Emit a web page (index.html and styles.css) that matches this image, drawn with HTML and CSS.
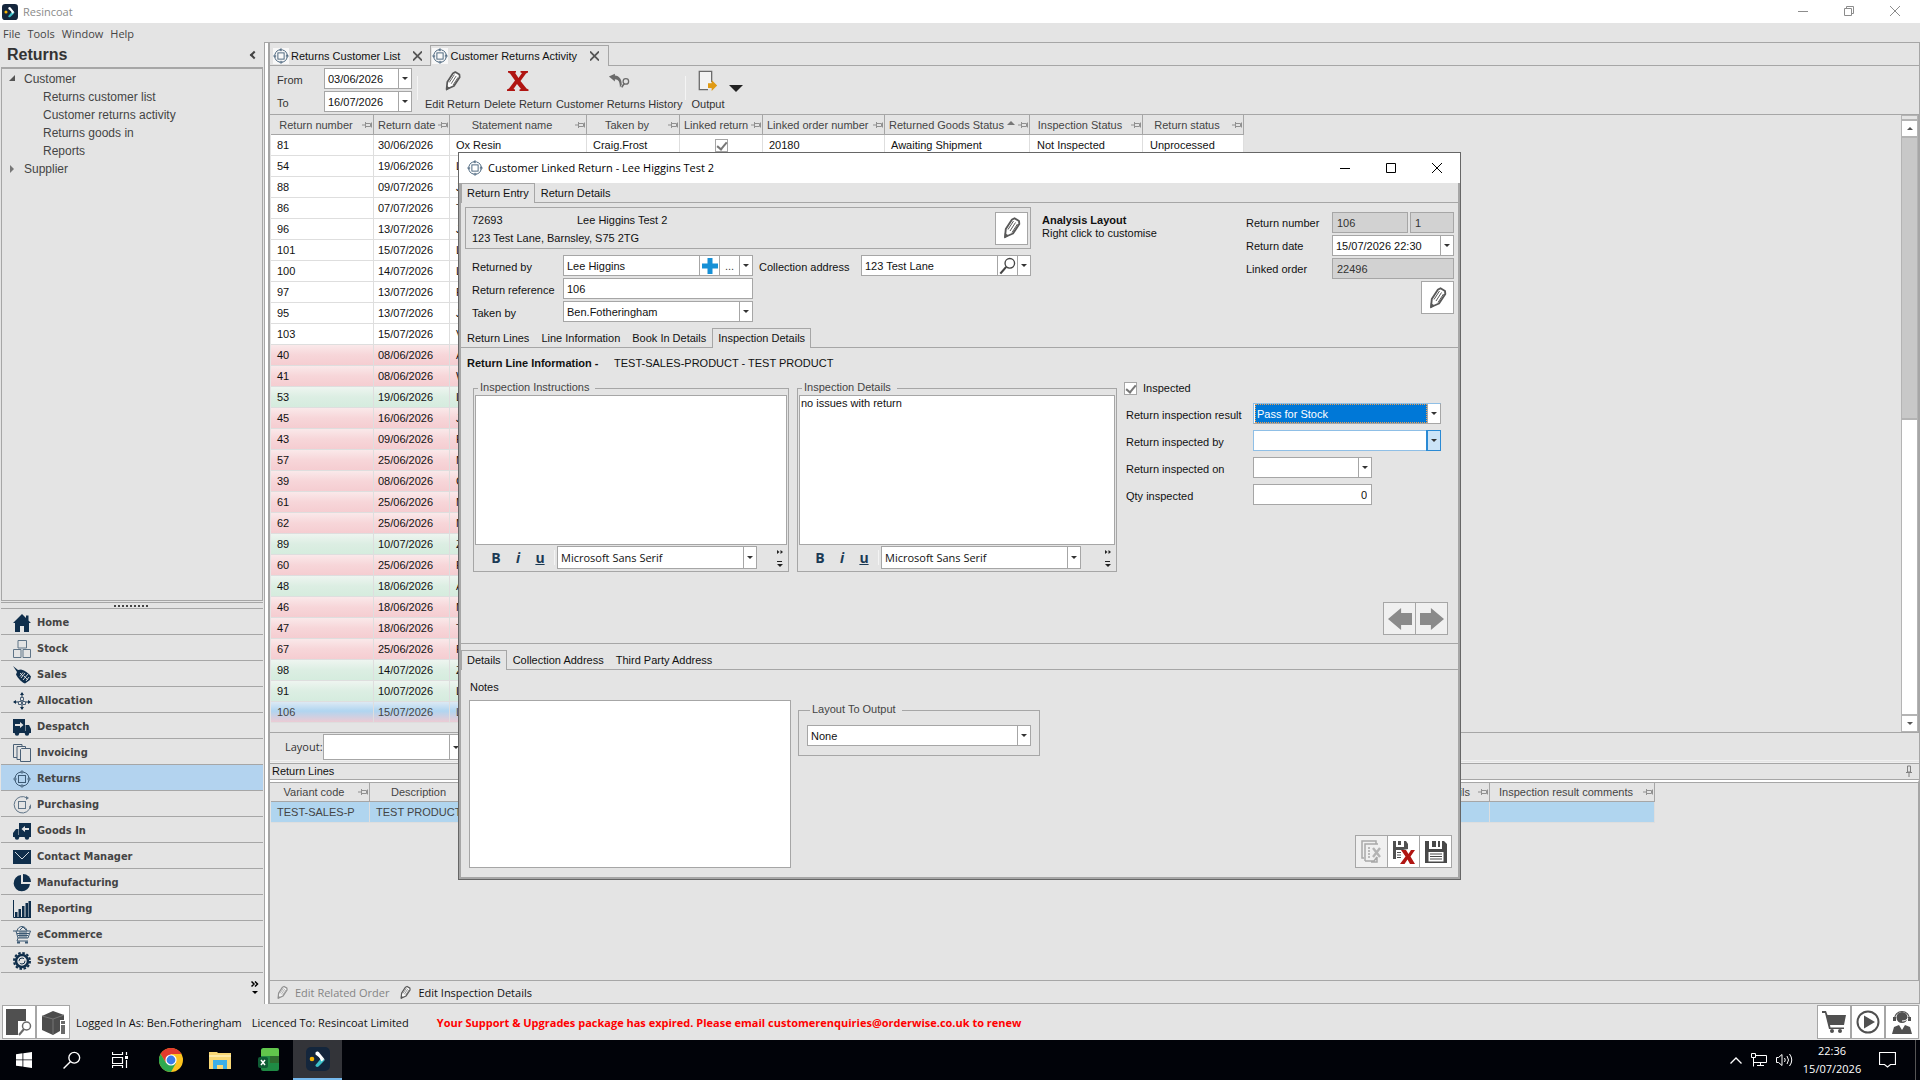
FILE: index.html
```html
<!DOCTYPE html>
<html lang="en">
<head>
<meta charset="utf-8">
<title>Resincoat</title>
<link rel="stylesheet" href="styles.css">
</head>
<body>
<svg class="sprite" aria-hidden="true">
  <symbol id="logo" viewBox="0 0 24 24"><rect width="24" height="24" rx="5" fill="#14263c"/><path d="M9.500 5.500C11 4 12.500 4.500 13.500 6l4.500 5.500c.5 1 .5 1.500 0 2.500L9.500 7.500z" fill="#fff"/><path d="M18 12c.5 1 .3 1.700-.5 2.500l-5 5c-1.500 1-3.500 0-3-1.500l5.500-6.500z" fill="#3cc0c8"/><path d="M12 8l6 4.500-2.500 2z" fill="#fff"/><circle cx="6" cy="12" r="2.300" fill="#f7b500"/></symbol>
  <symbol id="returns" viewBox="0 0 18 18"><circle cx="9" cy="9" r="7" fill="none" stroke="#3d5a74" stroke-width="1" stroke-dasharray="9 2" stroke-dashoffset="-1"/><rect x="5.500" y="5.500" width="7" height="7" fill="none" stroke="#3d5a74"/><path d="M9 0l2 2-2 2-2-2zM9 14l2 2-2 2-2-2zM0 9l2-2 2 2-2 2zM14 9l2-2 2 2-2 2z" fill="#3d5a74" opacity=".7"/></symbol>
  <symbol id="pencil" viewBox="0 0 24 24"><path d="M5 21l.8-8L12 3.500l2.500-1.200 4.500 2.700.3 3L13 17.500z" fill="#fff" stroke="#585858" stroke-width="1.900" stroke-linejoin="round"/><path d="M8 13.500l5.500-8.500M10 15l5.500-8.500M12 16.500l5.500-8.500" stroke="#585858" stroke-width="1" fill="none"/><path d="M4.500 22.500l.3-5.500 4 2.500z" fill="#585858"/></symbol>
  <symbol id="redx" viewBox="0 0 22 20"><path d="M1 0h8v1.500l-1 .3L11.500 7 15 2l-1.500-.5V0H21v1.500l-2 1L13.500 10l6 7.500 2 1V20h-9v-1.500l1.500-.5L10 13l-3.500 5 1.500.5V20H0v-1.500l2-1L8 9.500 3 2.500l-2-1z" fill="#b01512"/></symbol>
  <symbol id="history" viewBox="0 0 24 18"><path d="M1 4l6.500-3v2c5 .5 7.500 4 7.500 10l-2 3c0-6-1.500-9-5.500-9v2.500z" fill="#6a6a6a"/><circle cx="19.500" cy="9.500" r="3" fill="none" stroke="#6a6a6a" stroke-width="1.400"/><path d="M17.500 12l-2.500 4" stroke="#6a6a6a" stroke-width="1.800"/></symbol>
  <symbol id="output" viewBox="0 0 24 24"><path d="M16 13V1.500H2.500v20H12" fill="#f2f2f2" stroke="#6a6a6a" stroke-width="1.400"/><path d="M12 14.500h4V11l6 6-6 6v-3.500h-4z" fill="#e09a12"/></symbol>
  <symbol id="pin" viewBox="0 0 10 8"><path d="M0 4h3M3.500 1v6M3.500 2.500h5v3h-5M9.500 1.500v5" fill="none" stroke="#909090"/></symbol>
  <symbol id="pinv" viewBox="0 0 8 12"><path d="M2.500 1h3v6h-3zM1 7.500h6M4 8v4" fill="none" stroke="#808080"/></symbol>
  <symbol id="lens" viewBox="0 0 20 20"><circle cx="12" cy="7" r="5.300" fill="none" stroke="currentColor" stroke-width="1.500"/><path d="M8 11l-6.500 7.500" stroke="currentColor" stroke-width="2.400"/></symbol>
  <symbol id="plus" viewBox="0 0 18 18"><path d="M6.500 1h5v5.500H17v5h-5.500V17h-5v-5.500H1v-5h5.500z" fill="#1690d6"/></symbol>
  <symbol id="home" viewBox="0 0 18 18"><path d="M9 0l4 4V1.500h2.500V6.500L18 9h-2v9h-5v-6H7v6H2V9H0z" fill="#0f2e4b"/></symbol>
  <symbol id="stock" viewBox="0 0 18 18"><path d="M5 .5h8.500v7.500H5zM.5 9.500H8v8H.5zM10 9.500h7.500v8H10z" fill="none" stroke="#5f7487"/></symbol>
  <symbol id="sales" viewBox="0 0 18 18"><path d="M0 0l5 4 3-.5c4 1 8 4 10 7L17 14l-5 3.500c-3-1-7-5-9-9L4 6z" fill="#0f2e4b"/><path d="M7 7l3 3M10 6.500l-3 4M8 12l4-5M10 14l5-6M13 15l3-4M11 10l4 4" stroke="#e4e4e4" stroke-width=".9"/></symbol>
  <symbol id="alloc" viewBox="0 0 18 18"><path d="M9 1v5M9 13v4M1 10h4M13 10h4" stroke="#0f2e4b"/><path d="M9 0l2 3H7zM9 18l2-3H7zM0 10l3-2v4zM18 10l-3-2v4z" fill="#0f2e4b"/><path d="M7.500 5.500h3v3h-3zM5.500 9.500h3v3h-3zM9.500 9.500h3v3h-3z" fill="none" stroke="#4a6076"/></symbol>
  <symbol id="truck" viewBox="0 0 18 18"><path d="M0 1h12v12H0zM12.500 7H16l2 4v3h-5.500z" fill="#0f2e4b"/><path d="M2 6h5V4l3.500 3L7 10V8H2z" fill="#e4e4e4"/><path d="M0 13h18v2H0z" fill="#0f2e4b"/><circle cx="4" cy="15.500" r="2.200" fill="#0f2e4b"/><circle cx="14" cy="15.500" r="2.200" fill="#0f2e4b"/></symbol>
  <symbol id="truckin" viewBox="0 0 18 18"><path d="M6 1h12v12H6zM5.500 7H3l-3 4v3h5.500z" fill="#0f2e4b"/><path d="M16 6h-4V4L8.500 7l3.500 3V8h4z" fill="#e4e4e4"/><path d="M0 13h18v2H0z" fill="#0f2e4b"/><circle cx="4" cy="15.500" r="2.200" fill="#0f2e4b"/><circle cx="14" cy="15.500" r="2.200" fill="#0f2e4b"/></symbol>
  <symbol id="invoice" viewBox="0 0 18 18"><path d="M4 13.500H.5V.5H9V2M7 15.500H4v-13h8.500V4.500M8.500 4.500h9v13h-10v-12z" fill="none" stroke="#4a6076"/></symbol>
  <symbol id="purchase" viewBox="0 0 18 18"><path d="M14 2A8.200 8.200 0 1 0 17.500 10" fill="none" stroke="#5f7487"/><rect x="5.500" y="5.500" width="7" height="7" fill="none" stroke="#5f7487"/><path d="M13 0l3 2-3 2zM18 8v5l-2-2z" fill="#5f7487"/></symbol>
  <symbol id="mail" viewBox="0 0 18 14"><rect width="18" height="14" fill="#0f2e4b"/><path d="M2 2l7 7 7-7" fill="none" stroke="#cfd6dc"/></symbol>
  <symbol id="pie" viewBox="0 0 18 18"><path d="M8 1a8.200 8.200 0 1 0 9 9H8z" fill="#0f2e4b"/><path d="M10 0a8 8 0 0 1 8 8h-8z" fill="#0f2e4b"/></symbol>
  <symbol id="bars" viewBox="0 0 18 18"><path d="M.5 0v17.500H18" fill="none" stroke="#0f2e4b"/><path d="M2 12h2.500v5H2zM5.500 9H8v8H5.500zM9 6h2.500v11H9zM12.500 3H15v14h-2.500zM15.500 1H18v16h-2.500z" fill="#0f2e4b"/></symbol>
  <symbol id="basket" viewBox="0 0 18 18"><path d="M0 5h3l2 7h10l2.500-7H3M5 12l-1 3h11" fill="none" stroke="#3d5a74"/><path d="M4 7.500h12M5 9.500h10M7 5v7M9 5v7M11 5v7M13 5v7M4 5c1-6 9-6 10 0M7 4l3-3 3 3" fill="none" stroke="#3d5a74"/><path d="M4 15.500h3v2H4zM12 15.500h3v2h-3z" fill="#3d5a74"/></symbol>
  <symbol id="gear" viewBox="0 0 18 18"><circle cx="9" cy="9" r="8" fill="none" stroke="#0f2e4b" stroke-width="2" stroke-dasharray="2.500 1.700"/><circle cx="9" cy="9" r="6" fill="none" stroke="#0f2e4b" stroke-width="2.500"/><circle cx="9" cy="9" r="3" fill="none" stroke="#0f2e4b" stroke-dasharray="7 2"/></symbol>
  <symbol id="docfind" viewBox="0 0 28 28"><path d="M1 1h20v12h-8v14H1z" fill="#505050"/><path d="M14 14h13v13H14z" fill="#fff"/><circle cx="21.500" cy="18" r="4" fill="none" stroke="#6a6a6a" stroke-width="1.500"/><path d="M19 21l-5 6" stroke="#6a6a6a" stroke-width="2"/></symbol>
  <symbol id="cube" viewBox="0 0 28 28"><path d="M3 8l11-5 11 4v5h-4v11l-7 4L3 22z" fill="#4c4c4c"/><path d="M3 8l11 3 11-4M14 11v15" stroke="#757575" fill="none"/><path d="M22 13h4v3h-4zM22 17h4v9h-4z" fill="#6a6a6a"/></symbol>
  <symbol id="cart" viewBox="0 0 24 24"><path d="M0 1h4l1.500 4H24l-2 10H8l.5 2.500H22V19H7L3 3H0z" fill="#505050"/><circle cx="10" cy="21" r="2" fill="#505050"/><circle cx="18" cy="21" r="2" fill="#505050"/></symbol>
  <symbol id="play" viewBox="0 0 24 24"><circle cx="12" cy="12" r="10.500" fill="none" stroke="#505050" stroke-width="2"/><path d="M8 5.500l11 6.500-11 6.500z" fill="#505050"/></symbol>
  <symbol id="agent" viewBox="0 0 24 24"><circle cx="12" cy="7.500" r="5.500" fill="#505050"/><path d="M4.500 9a7.500 7.500 0 0 1 15 0" fill="none" stroke="#505050" stroke-width="1.200"/><path d="M3 7h3v4H3zM18 7h3v4h-3z" fill="#505050"/><path d="M12 11c3 0 5-1 6-3" fill="none" stroke="#fff"/><path d="M2 24l2-7 5-2 3 5 3-5 5 2 2 7z" fill="#505050"/></symbol>
  <symbol id="floppy" viewBox="0 0 24 24"><path d="M1 1h4v8h13V1h2l3 3v19H1z" fill="#484848"/><path d="M8 1h4v6H8zM14 1h2v6h-2z" fill="#484848"/><path d="M4.500 12h15v9.500h-15z" fill="#fff"/><path d="M6 14h12M6 16.500h12M6 19h12" stroke="#484848" stroke-width="1.200"/></symbol>
  <symbol id="floppyx" viewBox="0 0 24 24"><path d="M1 1h3v6h8V1h2l2 3v5l-5 1H4v9H1z" fill="#505050"/><path d="M6 1h3v4H6zM5 12h4v1H5zM5 14.500h4v1H5zM5 17h4v1H5z" fill="#505050"/><path d="M9 10h5l2.500 4 2.500-4h4l-4.500 6.500L23 24h-5l-2.500-4.500L12.500 24H8l5.500-7.500z" fill="#b01512"/></symbol>
  <symbol id="pagex" viewBox="0 0 24 24"><path d="M4 18H2V1h14v3M5 21V4h8l5 0M5 21h9l3-4M17 17v5h-6M8 8h2M8 11h2M8 14h2M8 17h2" fill="none" stroke="#a8a8a8" stroke-width="1.500"/><path d="M13 8l7 9M20 8l-7 9" stroke="#b4b4b4" stroke-width="2.400"/></symbol>
  <symbol id="left" viewBox="0 0 22 22"><path d="M0 11L12 1v4.500h10v11H12V21z" fill="#8a8a8a"/></symbol>
  <symbol id="right" viewBox="0 0 22 22"><path d="M22 11L10 1v4.500H0v11h10V21z" fill="#8a8a8a"/></symbol>
  <symbol id="min" viewBox="0 0 10 10"><path d="M0 5.500h10" stroke="currentColor"/></symbol>
  <symbol id="max" viewBox="0 0 10 10"><path d="M.5.5h9v9h-9z" fill="none" stroke="currentColor"/></symbol>
  <symbol id="restore" viewBox="0 0 10 10"><path d="M.5 2.500h7v7h-7zM2.500 2V.5h7v7H8" fill="none" stroke="currentColor"/></symbol>
  <symbol id="close" viewBox="0 0 10 10"><path d="M0 0l10 10M10 0L0 10" stroke="currentColor"/></symbol>
  <symbol id="more" viewBox="0 0 6 18"><path d="M0 1l2.500 2L0 5zM3.500 1L6 3 3.500 5z" fill="#222"/><path d="M0 12.500h5" stroke="#222"/><path d="M0 15h6l-3 3z" fill="#222"/></symbol>
</svg>

<header class="titlebar">
  <svg class="i16"><use href="#logo"/></svg><span class="apptitle">Resincoat</span>
  <div class="winctl dim"><button aria-label="Minimise"><svg><use href="#min"/></svg></button><button aria-label="Restore"><svg><use href="#restore"/></svg></button><button aria-label="Close"><svg><use href="#close"/></svg></button></div>
</header>
<nav class="menubar"><a href="#">File</a><a href="#">Tools</a><a href="#">Window</a><a href="#">Help</a></nav>

<div class="work">
  <aside class="side">
    <h1>Returns<span class="collapse"></span></h1>
    <ul class="tree">
      <li class="open">Customer</li>
      <li class="leaf"><a href="#">Returns customer list</a></li>
      <li class="leaf"><a href="#">Customer returns activity</a></li>
      <li class="leaf"><a href="#">Returns goods in</a></li>
      <li class="leaf"><a href="#">Reports</a></li>
      <li class="shut">Supplier</li>
    </ul>
    <div class="grip"></div>
    <nav class="modules">
      <a href="#"><svg><use href="#home"/></svg>Home</a>
      <a href="#"><svg><use href="#stock"/></svg>Stock</a>
      <a href="#"><svg><use href="#sales"/></svg>Sales</a>
      <a href="#"><svg><use href="#alloc"/></svg>Allocation</a>
      <a href="#"><svg><use href="#truck"/></svg>Despatch</a>
      <a href="#"><svg><use href="#invoice"/></svg>Invoicing</a>
      <a href="#" class="on"><svg><use href="#returns"/></svg>Returns</a>
      <a href="#"><svg><use href="#purchase"/></svg>Purchasing</a>
      <a href="#"><svg><use href="#truckin"/></svg>Goods In</a>
      <a href="#"><svg><use href="#mail"/></svg>Contact Manager</a>
      <a href="#"><svg><use href="#pie"/></svg>Manufacturing</a>
      <a href="#"><svg><use href="#bars"/></svg>Reporting</a>
      <a href="#"><svg><use href="#basket"/></svg>eCommerce</a>
      <a href="#"><svg><use href="#gear"/></svg>System</a>
    </nav>
    <div class="overflow"><svg width="8" height="14" viewBox="0 0 8 14"><path d="M.5.5l2.500 2.500L.5 5.500M4 .5L6.500 3 4 5.500" fill="none" stroke="#000" stroke-width="1.500"/><path d="M1 10h6l-3 3z"/></svg></div>
  </aside>

  <main class="main">
    <div class="doctabs">
      <div class="doctab"><svg class="i16 tile"><use href="#returns"/></svg>Returns Customer List<button class="x" aria-label="Close tab"><svg><use href="#close"/></svg></button></div>
      <div class="doctab on"><svg class="i16 tile"><use href="#returns"/></svg>Customer Returns Activity<button class="x" aria-label="Close tab"><svg><use href="#close"/></svg></button></div>
    </div>
    <div class="toolbar">
      <div class="dates">
        <label for="from">From</label><div class="combo"><input id="from" value="03/06/2026"><i class="arr"></i></div>
        <label for="to">To</label><div class="combo"><input id="to" value="16/07/2026"><i class="arr"></i></div>
      </div>
      <i class="sep"></i>
      <button class="tool"><svg><use href="#pencil"/></svg>Edit Return</button>
      <button class="tool"><svg><use href="#redx"/></svg>Delete Return</button>
      <button class="tool"><svg><use href="#history"/></svg>Customer Returns History</button>
      <i class="sep slim"></i>
      <button class="tool out"><svg><use href="#output"/></svg>Output</button>
      <i class="bigarr"></i>
    </div>
    <div class="gridwrap">
      <table class="grid top">
        <colgroup><col class="c103"><col class="c76"><col class="c137"><col class="c93"><col class="c83"><col class="c122"><col class="c145"><col class="c113"><col class="c100"></colgroup>
        <thead><tr><th>Return number<svg><use href="#pin"/></svg></th><th class="tight">Return date<svg><use href="#pin"/></svg></th><th>Statement name<svg><use href="#pin"/></svg></th><th>Taken by<svg><use href="#pin"/></svg></th><th class="tight">Linked return<svg><use href="#pin"/></svg></th><th class="tight">Linked order number<svg><use href="#pin"/></svg></th><th class="tight">Returned Goods Status<i class="sort"></i><svg><use href="#pin"/></svg></th><th>Inspection Status<svg><use href="#pin"/></svg></th><th>Return status<svg><use href="#pin"/></svg></th></tr></thead>
        <tbody>
          <tr><td>81</td><td>30/06/2026</td><td>Ox Resin</td><td>Craig.Frost</td><td class="mid"><input type="checkbox" class="tick" checked aria-label="Linked return"></td><td>20180</td><td>Awaiting Shipment</td><td>Not Inspected</td><td>Unprocessed</td></tr>
          <tr><td>54</td><td>19/06/2026</td><td>L</td><td></td><td></td><td></td><td></td><td></td><td></td></tr>
          <tr><td>88</td><td>09/07/2026</td><td>J</td><td></td><td></td><td></td><td></td><td></td><td></td></tr>
          <tr><td>86</td><td>07/07/2026</td><td>T</td><td></td><td></td><td></td><td></td><td></td><td></td></tr>
          <tr><td>96</td><td>13/07/2026</td><td>J</td><td></td><td></td><td></td><td></td><td></td><td></td></tr>
          <tr><td>101</td><td>15/07/2026</td><td>L</td><td></td><td></td><td></td><td></td><td></td><td></td></tr>
          <tr><td>100</td><td>14/07/2026</td><td>L</td><td></td><td></td><td></td><td></td><td></td><td></td></tr>
          <tr><td>97</td><td>13/07/2026</td><td>F</td><td></td><td></td><td></td><td></td><td></td><td></td></tr>
          <tr><td>95</td><td>13/07/2026</td><td>J</td><td></td><td></td><td></td><td></td><td></td><td></td></tr>
          <tr><td>103</td><td>15/07/2026</td><td>V</td><td></td><td></td><td></td><td></td><td></td><td></td></tr>
          <tr class="r"><td>40</td><td>08/06/2026</td><td>A</td><td></td><td></td><td></td><td></td><td></td><td></td></tr>
          <tr class="r"><td>41</td><td>08/06/2026</td><td>W</td><td></td><td></td><td></td><td></td><td></td><td></td></tr>
          <tr class="g"><td>53</td><td>19/06/2026</td><td>L</td><td></td><td></td><td></td><td></td><td></td><td></td></tr>
          <tr class="r"><td>45</td><td>16/06/2026</td><td>J</td><td></td><td></td><td></td><td></td><td></td><td></td></tr>
          <tr class="r"><td>43</td><td>09/06/2026</td><td>F</td><td></td><td></td><td></td><td></td><td></td><td></td></tr>
          <tr class="r"><td>57</td><td>25/06/2026</td><td>M</td><td></td><td></td><td></td><td></td><td></td><td></td></tr>
          <tr class="r"><td>39</td><td>08/06/2026</td><td>C</td><td></td><td></td><td></td><td></td><td></td><td></td></tr>
          <tr class="r"><td>61</td><td>25/06/2026</td><td>M</td><td></td><td></td><td></td><td></td><td></td><td></td></tr>
          <tr class="r"><td>62</td><td>25/06/2026</td><td>M</td><td></td><td></td><td></td><td></td><td></td><td></td></tr>
          <tr class="g"><td>89</td><td>10/07/2026</td><td>Z</td><td></td><td></td><td></td><td></td><td></td><td></td></tr>
          <tr class="r"><td>60</td><td>25/06/2026</td><td>F</td><td></td><td></td><td></td><td></td><td></td><td></td></tr>
          <tr class="g"><td>48</td><td>18/06/2026</td><td>A</td><td></td><td></td><td></td><td></td><td></td><td></td></tr>
          <tr class="r"><td>46</td><td>18/06/2026</td><td>M</td><td></td><td></td><td></td><td></td><td></td><td></td></tr>
          <tr class="r"><td>47</td><td>18/06/2026</td><td>T</td><td></td><td></td><td></td><td></td><td></td><td></td></tr>
          <tr class="r"><td>67</td><td>25/06/2026</td><td>F</td><td></td><td></td><td></td><td></td><td></td><td></td></tr>
          <tr class="g"><td>98</td><td>14/07/2026</td><td>Z</td><td></td><td></td><td></td><td></td><td></td><td></td></tr>
          <tr class="g"><td>91</td><td>10/07/2026</td><td>L</td><td></td><td></td><td></td><td></td><td></td><td></td></tr>
          <tr class="s"><td>106</td><td>15/07/2026</td><td>L</td><td></td><td></td><td></td><td></td><td></td><td></td></tr>
        </tbody>
      </table>
      <div class="scroll"><i class="stub"></i><i class="sbtn up"></i><i class="thumb"></i><i class="track"></i><i class="sbtn down"></i></div>
    </div>
    <div class="layoutbar"><label for="layout">Layout:</label><div class="combo"><select id="layout"><option></option></select><i class="arr"></i></div></div>
    <div class="linehead">Return Lines<svg><use href="#pinv"/></svg></div>
    <div class="linewrap">
      <table class="grid lines">
        <colgroup><col class="c99"><col class="c110"><col><col class="c165"></colgroup>
        <thead><tr><th>Variant code<svg><use href="#pin"/></svg></th><th>Description<svg><use href="#pin"/></svg></th><th class="end">Inspection details<svg><use href="#pin"/></svg></th><th>Inspection result comments<svg><use href="#pin"/></svg></th></tr></thead>
        <tbody><tr class="sel"><td>TEST-SALES-P</td><td>TEST PRODUCT</td><td></td><td></td></tr></tbody>
      </table>
    </div>
    <div class="linebar"><button disabled><svg><use href="#pencil"/></svg>Edit Related Order</button><button><svg><use href="#pencil"/></svg>Edit Inspection Details</button></div>
  </main>
</div>

<footer class="status">
  <button class="sq" aria-label="Find document"><svg class="i28"><use href="#docfind"/></svg></button><button class="sq" aria-label="Stock information"><svg class="i28"><use href="#cube"/></svg></button>
  <span class="who">Logged In As: Ben.Fotheringham</span><span class="lic">Licenced To: Resincoat Limited</span>
  <strong>Your Support &amp; Upgrades package has expired. Please email customerenquiries@orderwise.co.uk to renew</strong>
  <button class="sq push" aria-label="Shop"><svg><use href="#cart"/></svg></button><button class="sq" aria-label="Videos"><svg><use href="#play"/></svg></button><button class="sq" aria-label="Support"><svg><use href="#agent"/></svg></button>
</footer>

<footer class="taskbar">
  <button class="sys" aria-label="Start"><svg viewBox="0 0 16 16" width="16" height="16"><path d="M0 2.200L6.500 1.300V7.500H0zM7.300 1.200L16 0v7.500H7.300zM0 8.300h6.500v6.300L0 13.700zM7.300 8.300H16V16l-8.700-1.200z" fill="#fff"/></svg></button>
  <button class="sys" aria-label="Search"><svg viewBox="0 0 16 16" width="18" height="18"><circle cx="10" cy="6" r="4.800" fill="none" stroke="#fff" stroke-width="1.200"/><path d="M6.500 9.500L.5 15.500" stroke="#fff" stroke-width="1.300"/></svg></button>
  <button class="sys" aria-label="Task view"><svg viewBox="0 0 17 16" width="17" height="16"><path d="M.5 0v2.500h10V0M.5 5.500h10v6H.5zM.5 16v-2.500h10V16M14.500 0v3M14.500 8v8" fill="none" stroke="#fff" stroke-width="1.200"/><path d="M13 4h3v3h-3z" fill="#fff"/></svg></button>
  <button class="app" aria-label="Browser"><svg viewBox="0 0 24 24" width="24" height="24"><circle cx="12" cy="12" r="12" fill="#fcc31e"/><path d="M1.600 6A12 12 0 0 1 22.400 6H12l-5 9z" fill="#e33b2e"/><path d="M1.600 6A12 12 0 0 0 12 24l5-9-10 0z" fill="#2da94f"/><circle cx="12" cy="12" r="5.600" fill="#fff"/><circle cx="12" cy="12" r="4.400" fill="#3b7de8"/></svg></button>
  <button aria-label="File Explorer"><svg viewBox="0 0 22 18" width="22" height="18"><path d="M0 1h8l1 1h13v16H0z" fill="#f8d775"/><path d="M0 4h22v2H0z" fill="#fdeaa8"/><path d="M4 9h14v9h-4v-4H8v4H4z" fill="#3aaee8"/></svg></button>
  <button aria-label="Spreadsheet"><svg viewBox="0 0 22 24" width="22" height="24"><rect x="3" width="18" height="23" rx="2" fill="#1f8a44"/><path d="M5 0h14a2 2 0 0 1 2 2v6H3V2z" fill="#62c64c"/><path d="M12 8h9v7h-9z" fill="#2f6b2e"/><rect y="9" width="10" height="11" rx="2" fill="#0f5c35"/><path d="M3 12l4 5M7 12l-4 5" stroke="#fff" stroke-width="1.500"/></svg></button>
  <button class="on" aria-label="Resincoat"><svg width="24" height="24"><use href="#logo"/></svg></button>
  <div class="tray">
    <svg viewBox="0 0 12 7" width="12" height="7"><path d="M.5 6.500L6 1l5.500 5.500" fill="none" stroke="#fff" stroke-width="1.300"/></svg>
    <svg viewBox="0 0 16 14" width="16" height="14"><path d="M5 2.500h10.500v7H3M.5.500h4v4h-4zM2.500 4.500v9M6 12.500h7M9.500 9.500v3" fill="none" stroke="#fff"/></svg>
    <svg viewBox="0 0 17 14" width="17" height="14"><path d="M.5 4.500h2L6 1.500v11L2.500 9.500h-2zM8.500 5q1.500 2 0 4M11 3q3 4 0 8M13.500 1q4.500 6 0 12" fill="none" stroke="#fff"/></svg>
    <div class="clock">22:36<br>15/07/2026</div>
    <svg viewBox="0 0 17 16" width="17" height="16"><path d="M.5.500h16v12h-5L8.500 15l-3-2.500h-5z" fill="none" stroke="#fff" stroke-width="1.200"/></svg>
  </div>
</footer>

<section class="dialog" role="dialog" aria-label="Customer Linked Return">
  <header class="dlghead"><svg class="i16"><use href="#returns"/></svg>Customer Linked Return - Lee Higgins Test 2
    <div class="winctl"><button aria-label="Minimise"><svg><use href="#min"/></svg></button><button aria-label="Maximise"><svg><use href="#max"/></svg></button><button aria-label="Close"><svg><use href="#close"/></svg></button></div>
  </header>
  <div class="dlgbody">
    <div class="tabs"><button class="on">Return Entry</button><button>Return Details</button></div>
    <div class="entry">
      <div class="cust">
        <div class="card"><div class="addr"><span>72693</span><span>Lee Higgins Test 2</span><span class="wide">123 Test Lane, Barnsley, S75 2TG</span></div><button class="sq sm" aria-label="Edit customer"><svg><use href="#pencil"/></svg></button></div>
        <div class="fields">
          <label for="by">Returned by</label><div class="combo"><input id="by" value="Lee Higgins"><button class="cell" aria-label="Add"><svg><use href="#plus"/></svg></button><button class="cell dots" aria-label="Browse">...</button><i class="arr"></i></div>
          <label for="addr" class="second">Collection address</label><div class="combo"><input id="addr" value="123 Test Lane"><button class="cell" aria-label="Search"><svg><use href="#lens"/></svg></button><i class="arr"></i></div>
          <label for="ref">Return reference</label><div class="combo"><input id="ref" value="106"></div>
          <label for="taken" class="first">Taken by</label><div class="combo"><select id="taken"><option>Ben.Fotheringham</option></select><i class="arr"></i></div>
        </div>
      </div>
      <div class="analysis"><b>Analysis Layout</b><br>Right click to customise</div>
      <div class="meta">
        <label for="num">Return number</label><div class="pair"><input id="num" class="box ro" readonly value="106"><input class="box ro short" readonly value="1" aria-label="Return part"></div>
        <label for="date">Return date</label><div class="combo"><input id="date" value="15/07/2026 22:30"><i class="arr"></i></div>
        <label for="order">Linked order</label><input id="order" class="box ro" readonly value="22496">
        <button class="sq sm" aria-label="Edit order"><svg><use href="#pencil"/></svg></button>
      </div>
    </div>
    <div class="tabs"><button>Return Lines</button><button>Line Information</button><button>Book In Details</button><button class="on">Inspection Details</button></div>
    <div class="panel">
      <div class="lineinfo"><b>Return Line Information -</b><span>TEST-SALES-PRODUCT - TEST PRODUCT</span></div>
      <div class="inspect">
        <fieldset class="editor instr"><legend>Inspection Instructions</legend><textarea aria-label="Inspection Instructions"></textarea>
          <div class="fmt"><button class="b">B</button><button class="it">i</button><button class="u">u</button><i class="sep"></i><div class="combo"><select aria-label="Font"><option>Microsoft Sans Serif</option></select><i class="arr"></i></div><svg class="more"><use href="#more"/></svg></div></fieldset>
        <fieldset class="editor found"><legend>Inspection Details</legend><textarea aria-label="Inspection Details">no issues with return</textarea>
          <div class="fmt"><button class="b">B</button><button class="it">i</button><button class="u">u</button><i class="sep"></i><div class="combo"><select aria-label="Font"><option>Microsoft Sans Serif</option></select><i class="arr"></i></div><svg class="more"><use href="#more"/></svg></div></fieldset>
        <div class="result">
          <label class="check"><input type="checkbox" class="tick" checked>Inspected</label>
          <div class="rows">
            <label for="res">Return inspection result</label><div class="combo focus"><select id="res"><option>Pass for Stock</option></select><i class="arr"></i></div>
            <label for="iby">Return inspected by</label><div class="combo hot"><select id="iby"><option></option></select><i class="arr"></i></div>
            <label for="ion">Return inspected on</label><div class="combo narrow"><input id="ion"><i class="arr"></i></div>
            <label for="qty">Qty inspected</label><input id="qty" class="box narrow num" value="0">
          </div>
        </div>
      </div>
      <div class="steps"><button class="sq sm off" aria-label="Previous"><svg><use href="#left"/></svg></button><button class="sq sm off" aria-label="Next"><svg><use href="#right"/></svg></button></div>
    </div>
    <div class="tabs"><button class="on">Details</button><button>Collection Address</button><button>Third Party Address</button></div>
    <div class="details">
      <div class="notes"><label for="notes">Notes</label><textarea id="notes"></textarea></div>
      <fieldset class="outbox"><legend>Layout To Output</legend><div class="combo"><select aria-label="Layout To Output"><option>None</option></select><i class="arr"></i></div></fieldset>
      <div class="saves"><button class="sq sm off" aria-label="Discard"><svg><use href="#pagex"/></svg></button><button class="sq sm" aria-label="Cancel changes"><svg><use href="#floppyx"/></svg></button><button class="sq sm" aria-label="Save"><svg><use href="#floppy"/></svg></button></div>
    </div>
  </div>
</section>
</body>
</html>
```
FILE: styles.css
```css
:root { --bg: #e4e4e4; --line: #a6a6a6; --text: #111; }
* { box-sizing: border-box; }
body { margin: 0; min-height: 100vh; display: flex; flex-direction: column; position: relative; background: var(--bg); color: var(--text); font: 11px/14px "Liberation Sans", Arial, sans-serif; }
button, input, select, textarea { font: inherit; color: inherit; margin: 0; padding: 0; border: 0; background: none; border-radius: 0; outline: 0; }
select { appearance: none; }
textarea { resize: none; display: block; }
a { color: inherit; text-decoration: none; }
svg { display: block; flex: none; }
.sprite { position: absolute; width: 0; height: 0; }
.i16 { width: 16px; height: 16px; }
.i28 { width: 28px; height: 28px; }

/* window frame */
.titlebar { height: 23px; background: #fff; display: flex; align-items: center; padding-left: 2px; gap: 5px; color: #8a8a8a; font: 11px/16px "Open Sans", sans-serif; }
.winctl { margin-left: auto; display: flex; align-self: stretch; }
.winctl button { width: 46px; display: grid; place-items: center; color: #000; }
.winctl svg { width: 10px; height: 10px; }
.winctl.dim { margin-right: 2px; }
.winctl.dim button { color: #8c8c8c; padding-bottom: 2px; }
.menubar { height: 19px; padding: 3px 0 0 3px; display: flex; gap: 7px; color: #444; font: 11px/16px "Open Sans", sans-serif; }
.work { flex: 1; display: flex; }

/* navigation pane */
.side { width: 264px; padding: 0 1px; display: flex; flex-direction: column; color: #444; }
.side h1 { margin: 0; height: 25px; padding: 0 6px; display: flex; align-items: center; justify-content: space-between; font-size: 16px; line-height: 26px; color: #333; }
.collapse { width: 6px; height: 6px; border: solid #444; border-width: 0 0 2px 2px; transform: rotate(45deg); }
.tree { flex: 1; margin: 0 0 1px; padding: 1px 0; list-style: none; border: 1px solid var(--line); border-top-width: 2px; font-size: 12px; }
.tree li { height: 18px; line-height: 18px; padding-left: 22px; position: relative; }
.tree .leaf { padding-left: 41px; }
.tree .open::before { content: ""; position: absolute; left: 7px; top: 5px; border: 3px solid #555; border-left-color: transparent; border-top-color: transparent; }
.tree .shut::before { content: ""; position: absolute; left: 8px; top: 5px; border: 4px solid transparent; border-left: 4px solid #777; }
.grip { height: 7px; border: solid var(--line); border-width: 1px 0; background: repeating-linear-gradient(90deg, #444 0 2px, transparent 2px 4px) center / 36px 2px no-repeat; }
.modules a { height: 26px; padding: 2px 0 0 12px; display: flex; align-items: center; gap: 6px; border-bottom: 1px solid var(--line); font: bold 11px/16px "DejaVu Sans Condensed", "DejaVu Sans", sans-serif; }
.modules svg { width: 18px; height: 18px; }
.modules .on { background: #b3d3ef; }
.overflow { height: 31px; padding: 8px 4px; display: flex; justify-content: flex-end; }

/* document area */
.main { flex: 1; min-width: 0; display: flex; flex-direction: column; border: solid var(--line); border-width: 1px 1px 0; box-shadow: inset 3px 0 #fff, inset 5px 0 var(--line); padding-left: 5px; }
.doctabs { height: 23px; display: flex; align-items: flex-end; border-bottom: 1px solid var(--line); }
.doctab { height: 20px; display: flex; align-items: center; gap: 2px; padding: 0 7px 1px 2px; border: 1px solid transparent; border-bottom: 0; margin-bottom: -1px; }
.doctab:first-child { padding-right: 5px; }
.doctab.on { height: 21px; background: var(--bg); border-color: var(--line); padding-left: 1px; }
.tile { background: #f8f8f8; }
.doctab .x { margin-left: 11px; width: 11px; height: 12px; color: #555; }
.doctab .x svg { width: 9px; height: 10px; stroke-width: 2px; }
.toolbar { height: 49px; padding: 2px 0 0 7px; display: flex; border-bottom: 1px solid var(--line); color: #333; }
.dates { display: grid; grid-template-columns: 47px 88px; grid-auto-rows: 21px; row-gap: 2px; line-height: 24px; }
.combo { display: flex; height: 21px; border: 1px solid var(--line); background: #fff; color: var(--text); line-height: 14px; }
.combo input, .combo select { flex: 1; min-width: 0; width: 0; padding: 0 3px; }
.arr { width: 13px; border-left: 1px solid var(--line); display: grid; place-items: center; pointer-events: none; }
.arr::before { content: ""; border: 3px solid transparent; border-top-color: #333; border-bottom: 0; }
.sep { width: 1px; background: #f4f4f4; margin: 8px 5px 14px 5px; }
.sep.slim { margin: 8px 3px 14px 1px; }
.tool { display: flex; flex-direction: column; align-items: center; padding: 0 2px; gap: 5px; height: 46px; }
.tool svg { width: 22px; height: 22px; margin-top: 2px; }
.tool.out { padding-right: 5px; }
.bigarr { align-self: flex-start; margin-top: 17px; border: 7px solid transparent; border-top: 7px solid #222; border-bottom: 0; }

/* grids */
.gridwrap { flex: 1; display: flex; justify-content: space-between; align-items: stretch; border-bottom: 1px solid var(--line); padding-left: 1px; }
.grid { border-collapse: separate; border-spacing: 0; table-layout: fixed; align-self: flex-start; }
.grid.top { width: 973px; }
.grid.lines { width: 1384px; }
.c76 { width: 76px; } .c83 { width: 83px; } .c93 { width: 93px; } .c99 { width: 99px; } .c100 { width: 101px; } .c103 { width: 103px; } .c110 { width: 110px; } .c113 { width: 113px; } .c122 { width: 122px; } .c137 { width: 137px; } .c145 { width: 145px; } .c165 { width: 165px; }
.grid th { height: 20px; padding: 0 16px 0 4px; position: relative; font-weight: normal; color: #444; border: solid var(--line); border-width: 0 1px 1px 0; white-space: nowrap; }
.grid th.tight { text-align: left; padding-left: 4px; }
.grid th.end { text-align: right; padding-right: 19px; }
.grid th svg { position: absolute; right: 1px; top: 6px; width: 10px; height: 8px; }
.sort { position: absolute; right: 14px; top: 6px; border: 4px solid transparent; border-bottom: 4px solid #777; border-top: 0; }
.grid td { height: 21px; padding: 0 4px; background: #fff; border: solid #dedede; border-width: 0 1px 1px 0; white-space: nowrap; }
.grid td:first-child { padding-left: 6px; }
.grid.lines td { padding-left: 6px; }
.top td:nth-child(n+3) { padding-left: 6px; }
.top td:nth-child(n+8) { padding-left: 7px; }
.grid .r td { background: linear-gradient(#fae9ea, #f7d6d9 50%, #f5cdd1); }
.grid .g td { background: linear-gradient(#eef5f0, #dceee3 50%, #d5ecde); }
.grid .s td { background: linear-gradient(#dce9f4, #b0d5f0 45%, #eccbd4); color: #444; }
.grid .sel td { background: #b0d5ef; color: #444; }
.grid td.mid { padding: 0; }
.tick { appearance: none; display: block; width: 13px; height: 13px; border: 1px solid var(--line); background: #fff; position: relative; }
.tick::after { content: ""; position: absolute; left: 3px; top: 0; width: 4px; height: 8px; border: solid #777; border-width: 0 2px 2px 0; transform: rotate(40deg); }
.mid .tick { margin: 0 auto; }
.scroll { width: 18px; display: flex; flex-direction: column; border-right: 1px solid var(--line); }
.scroll i { border: 1px solid #b4b4b4; }
.stub { height: 5px; }
.sbtn { height: 17px; background: #fff; display: grid; place-items: center; }
.sbtn::before { content: ""; border: 3px solid transparent; }
.scroll .up::before { border-bottom-color: #555; border-top: 0; }
.scroll .down::before { border-top-color: #555; border-bottom: 0; }
.thumb { flex: 281; background: #c8c8c8; }
.track { flex: 296; background: #fff; }
.layoutbar { height: 27px; padding: 1px 0 0 15px; display: flex; color: #333; font: 11px/25px "Open Sans", sans-serif; border-bottom: 1px solid var(--bg); }
.layoutbar label { width: 38px; }
.layoutbar .combo { width: 140px; height: 26px; }
.linehead { height: 20px; padding: 0 6px 0 2px; border: solid var(--line); border-width: 1px 0; border-top: 3px double #f0f0f0; box-shadow: inset 0 1px var(--line); display: flex; justify-content: space-between; align-items: center; line-height: 16px; }
.linehead svg { width: 8px; height: 12px; }
.linewrap { height: 200px; border-top: 2px solid #fff; padding-left: 1px; border-right: 1px solid var(--line); box-shadow: inset 0 1px var(--line); }
.linebar { height: 24px; padding: 1px 0 0 5px; border: solid var(--line); border-width: 1px 0; display: flex; align-items: center; gap: 9px; font: 11px/16px "Open Sans", sans-serif; }
.linebar button { display: flex; align-items: center; gap: 5px; }
.linebar svg { width: 15px; height: 15px; }
.linebar button:disabled { color: #848484; }
.linebar button:disabled svg { opacity: .6; }

/* status bar and taskbar */
.status { height: 36px; padding: 0 1px 0 2px; display: flex; align-items: center; font: 11px/16px "Open Sans", sans-serif; }
.status strong { color: #f00; margin-left: 28px; padding-top: 1px; }
.who, .lic { padding-top: 1px; }
.who { margin-left: 6px; }
.lic { margin-left: 10px; }
.sq { width: 34px; height: 34px; background: #fff; border: 1px solid var(--line); display: grid; place-items: center; flex: none; }
.sq svg { width: 24px; height: 24px; }
.sq .i28 { width: 28px; height: 28px; }
.sq.sm + .sq.sm { margin-left: -1px; }
.push { margin-left: auto; }
.sq.sm { width: 33px; height: 33px; }
.off { background: #f0f0f0; }
.taskbar { height: 40px; background: #010309; display: flex; color: #fff; }
.taskbar button { width: 49px; display: grid; place-items: center; }
.taskbar .sys { width: 48px; }
.taskbar .app { margin-left: 2px; }
.taskbar button.on { background: #333439; border-bottom: 2px solid #76b9ed; }
.tray { margin-left: auto; display: flex; align-items: center; gap: 9px; padding-right: 19px; margin-right: 4px; border-right: 1px solid #555; }
.clock { font: 11px/18px "Open Sans", sans-serif; text-align: center; width: 60px; margin-right: 8px; white-space: nowrap; }

/* return dialog */
.dialog { position: absolute; left: 458px; top: 152px; width: 1003px; border: 1px solid #666; background: var(--bg); }
.dlghead { height: 30px; background: #fff; padding-left: 8px; display: flex; align-items: center; gap: 5px; font: 11px/16px "Open Sans", sans-serif; color: #000; }
.dlgbody { border: 2px solid var(--line); border-top: 0; }
.tabs { height: 20px; display: flex; border-bottom: 1px solid var(--line); }
.tabs button { height: 20px; padding: 0 5px 1px; border: 1px solid transparent; border-bottom: 0; line-height: 17px; white-space: nowrap; }
.tabs .on { background: var(--bg); border-color: var(--line); }
.entry { height: 125px; padding: 4px 4px 0 4px; display: flex; }
.cust { width: 566px; }
.card { height: 42px; border: 1px solid var(--line); padding: 0 2px 0 6px; display: flex; justify-content: space-between; align-items: center; }
.addr { display: grid; grid-template-columns: 105px 1fr; line-height: 18px; padding-top: 2px; }
.wide { grid-column: 1 / -1; }
.fields { margin-top: 6px; padding-left: 7px; display: grid; grid-template-columns: 91px 190px 108px 170px; grid-auto-rows: 21px; row-gap: 2px; line-height: 24px; }
.fields .second { padding-left: 6px; }
.fields .first { grid-column: 1; }
.cell { width: 20px; border-left: 1px solid var(--line); display: grid; place-items: center; color: #444; }
.cell svg { width: 18px; height: 18px; }
.analysis { margin: 7px 0 0 11px; line-height: 13px; flex: 1; }
.meta { margin-top: 5px; display: grid; grid-template-columns: 86px 122px; grid-auto-rows: 21px; row-gap: 2px; line-height: 23px; }
.meta .sq { grid-column: 2; justify-self: end; }
.pair { display: flex; gap: 2px; }
.box { height: 21px; border: 1px solid var(--line); background: #fff; padding: 0 4px; min-width: 0; width: 100%; line-height: 14px; }
.pair .short { width: 44px; flex: none; }
.ro { background: #d2d2d2; color: #333; }
.panel { height: 296px; border-bottom: 1px solid var(--line); margin-bottom: 6px; padding: 0 10px 0 6px; display: flex; flex-direction: column; }
.lineinfo { height: 33px; line-height: 31px; display: flex; }
.lineinfo b { width: 147px; }
.inspect { display: flex; padding-left: 6px; }
fieldset { min-width: 0; margin: 0; padding: 0 1px; border: 1px solid var(--line); color: #444; }
legend { padding: 0 6px 2px 2px; margin-left: 3px; line-height: 12px; }
.instr { width: 316px; margin-right: 8px; }
.found { width: 320px; margin-right: 7px; }
textarea { width: 100%; height: 150px; background: #fff; border: 1px solid var(--line); padding: 0 1px; color: var(--text); }
.fmt { height: 26px; padding: 1px 4px 2px 10px; display: flex; align-items: center; color: #1b3a55; }
.fmt button { width: 22px; text-align: center; font: bold 14px/18px "Open Sans", sans-serif; }
.fmt .it { font-style: italic; } .fmt .u { text-decoration: underline; }
.fmt .sep { align-self: stretch; margin: 4px 0 4px 3px; }
.fmt .combo { width: 200px; height: 23px; margin-left: 2px; font: 11px/16px "Open Sans", sans-serif; }
.more { width: 6px; height: 18px; margin-left: auto; }
.result { margin-top: 1px; }
.check { display: flex; gap: 6px; line-height: 13px; }
.rows { margin: 8px 0 0 2px; display: grid; grid-template-columns: 127px 188px; grid-auto-rows: 21px; row-gap: 6px; line-height: 24px; }
.narrow { width: 119px; }
.num { text-align: right; }
.focus { border-color: #8fbfe6 var(--line) var(--line) #8fbfe6; }
.combo.focus select { background: #0078d7; color: #fff; margin-left: 1px; padding: 0 1px; border: 1px dotted #f0a050; }
.hot { border-color: #8fbfe6; }
.hot .arr { background: #cce4f7; outline: 1px solid #2a8ad4; border-left-color: #2a8ad4; }
.steps { margin-top: auto; padding-bottom: 8px; display: flex; justify-content: flex-end; }
.details { height: 207px; padding: 0 6px 9px 8px; display: flex; }
.notes { width: 322px; line-height: 30px; margin-top: 2px; }
.notes label { display: block; height: 28px; padding-left: 1px; }
.notes textarea { height: 168px; line-height: 14px; }
.outbox { width: 242px; height: 53px; margin: 33px 0 0 7px; padding: 8px 8px 0; align-self: flex-start; }
.saves { margin-left: auto; align-self: flex-end; display: flex; }
```
